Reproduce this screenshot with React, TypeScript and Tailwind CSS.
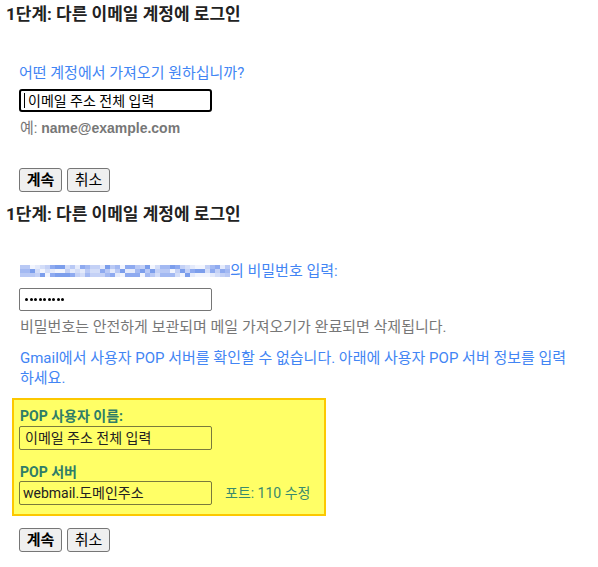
import React from "react";

const FONT = "font-['Roboto','Noto_Sans_CJK_KR',sans-serif]";

const blurColors = [
  "bg-[#b9c9f5]",
  "bg-[#8eaaf0]",
  "bg-[#d3ddf8]",
  "bg-[#7c9eec]",
  "bg-[#a3b9f2]",
  "bg-[#e4eafb]",
  "bg-[#c4d1f6]",
  "bg-[#f1f4fd]",
];

function Blur() {
  const cols = 42;
  const cells: React.ReactNode[] = [];
  for (let r = 0; r < 3; r++) {
    for (let c = 0; c < cols; c++) {
      const idx = (c * 5 + r * 3 + ((c * c * 3 + r) % 7)) % blurColors.length;
      cells.push(<span key={`${r}-${c}`} className={`block w-[5px] h-[4px] ${blurColors[idx]}`} />);
    }
  }
  return (
    <span className="inline-grid grid-cols-[repeat(42,5px)] w-[210px] h-[12px] align-middle">
      {cells}
    </span>
  );
}

function Btn({ children, bold }: { children: React.ReactNode; bold?: boolean }) {
  return (
    <button
      className={`w-[43px] h-[24px] bg-[#efefef] border border-[#767676] rounded-[3px] text-[15px] leading-[20px] text-black ${FONT} ${bold ? "font-bold" : ""}`}
    >
      {children}
    </button>
  );
}

export default function App() {
  return (
    <div className={`w-[598px] h-[567px] bg-white pl-[6px] pt-[4px] ${FONT} text-[15px]`}>
      <h2 className="text-[17px] leading-[20px] font-bold text-[#222]">1단계: 다른 이메일 계정에 로그인</h2>
      <div className="ml-[13px] mt-[40px]">
        <p className="text-[15px] leading-[18px] text-[#4285f4]">어떤 계정에서 가져오기 원하십니까?</p>
        <div className="mt-[7px] w-[193px] h-[23px] border-2 border-black rounded-[3px] flex items-center pl-[3px]">
          <span className="w-px h-[15px] bg-black mr-[3px]" />
          <span className="text-[14px] leading-[18px] text-black">이메일 주소 전체 입력</span>
        </div>
        <p className="mt-[7px] ml-[1px] text-[15px] leading-[18px] text-[#777]">
          예: <span className="text-[14px] font-bold font-['Liberation_Sans',sans-serif]">name@example.com</span>
        </p>
        <div className="mt-[31px] flex gap-[5px]">
          <Btn bold>계속</Btn>
          <Btn>취소</Btn>
        </div>
      </div>
      <h2 className="mt-[12px] text-[17px] leading-[20px] font-bold text-[#222]">1단계: 다른 이메일 계정에 로그인</h2>
      <div className="ml-[13px] mt-[38px]">
        <p className="ml-[1px] text-[15px] leading-[18px] text-[#4285f4] flex items-center">
          <Blur />
          <span>의 비밀번호 입력:</span>
        </p>
        <div className="mt-[8px] w-[193px] h-[23px] border border-[#767676] rounded-[2px] flex items-center gap-[1.5px] pl-[5px]">
          {Array.from({ length: 9 }).map((_, i) => (
            <span key={i} className="block w-[3px] h-[3px] rounded-full bg-black" />
          ))}
        </div>
        <p className="mt-[7px] ml-[1px] text-[15px] leading-[18px] text-[#777]">
          비밀번호는 안전하게 보관되며 메일 가져오기가 완료되면 삭제됩니다.
        </p>
        <p className="mt-[12px] ml-[1px] w-[570px] text-[15px] leading-[20px] text-[#4285f4]">
          Gmail에서 사용자 POP 서버를 확인할 수 없습니다. 아래에 사용자 POP 서버 정보를 입력
          <br />
          하세요.
        </p>
      </div>
      <div className="ml-[6px] mt-[10px] w-[314px] h-[118px] bg-[#ffff66] border-2 border-[#fcc800] pl-[5px] pt-[7px]">
        <p className="ml-[1px] text-[14px] leading-[18px] font-bold text-[#2f7d68]">POP 사용자 이름:</p>
        <div className="mt-[1px] w-[193px] h-[24px] border border-[#7a7a3c] rounded-[2px] flex items-center pl-[5px]">
          <span className="text-[14px] leading-[18px] text-[#222]">이메일 주소 전체 입력</span>
        </div>
        <p className="mt-[13px] ml-[1px] text-[14px] leading-[18px] font-bold text-[#2f7d68]">POP 서버</p>
        <div className="flex items-center">
          <div className="w-[193px] h-[24px] border border-[#7a7a3c] rounded-[2px] flex items-center pl-[3px]">
            <span className="text-[14px] leading-[18px] text-[#222]">webmail.도메인주소</span>
          </div>
          <span className="ml-[13px] text-[14px] leading-[18px] text-[#3a8a6c]">포트: 110 수정</span>
        </div>
      </div>
      <div className="ml-[13px] mt-[12px] flex gap-[5px]">
        <Btn bold>계속</Btn>
        <Btn>취소</Btn>
      </div>
    </div>
  );
}
